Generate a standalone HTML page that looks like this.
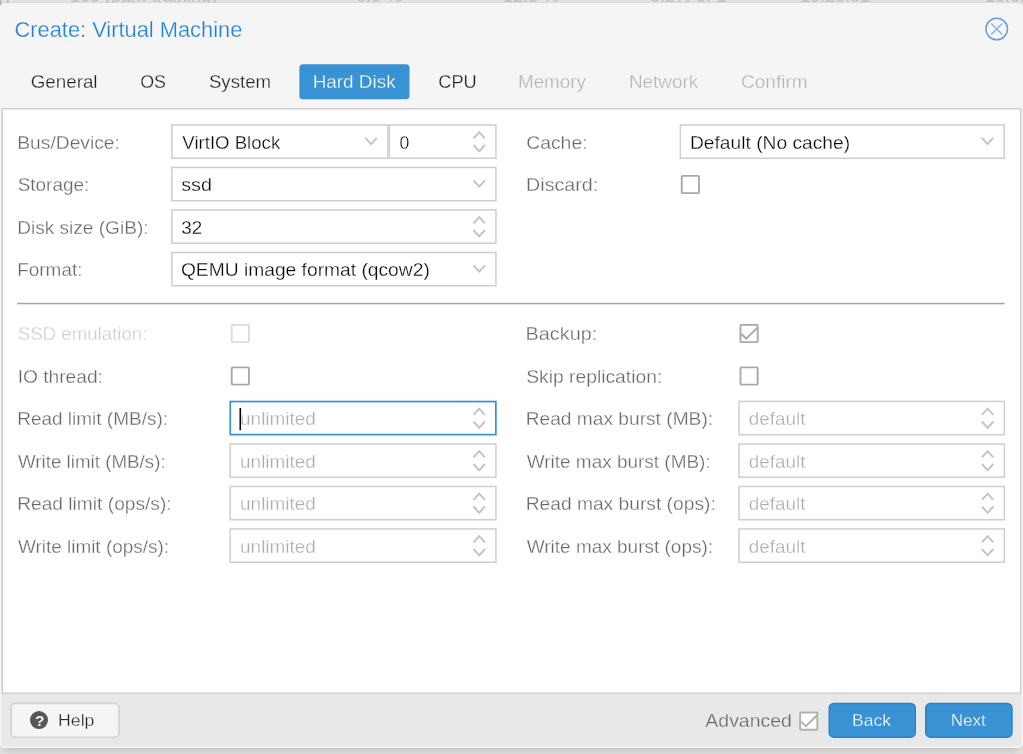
<!DOCTYPE html>
<html><head><meta charset="utf-8"><title>Create: Virtual Machine</title>
<style>
html,body{margin:0;padding:0;background:#dcdcdc;}
body{width:1023px;height:754px;overflow:hidden;}
svg{display:block;}
text{font-family:'Liberation Sans', Arial, sans-serif;font-size:18.7px;white-space:pre;stroke-linejoin:round;}
.title{font-size:22.4px;fill:#2583d2;stroke:#f5f5f5;stroke-width:.25px;}
.tab{fill:#1e1e1e;stroke:#f5f5f5;stroke-width:.28px;}
.tabact{fill:#fff;stroke:#3892d4;stroke-width:.28px;}
.tabdis{fill:#b4b4b4;stroke:#f5f5f5;stroke-width:.28px;}
.lbl{fill:#696969;stroke:#fff;stroke-width:.28px;}
.lbldis{fill:#cfcfcf;stroke:#fff;stroke-width:.28px;}
.val{fill:#080808;stroke:#fff;stroke-width:.28px;}
.ph{fill:#adadad;stroke:#fff;stroke-width:.28px;}
.btn{font-size:17.3px;fill:#fff;stroke:#3892d4;stroke-width:.28px;}
.btnhelp{font-size:17.3px;fill:#2a2a2a;stroke:#f5f5f5;stroke-width:.28px;}
.adv{fill:#666;stroke:#e8e8e8;stroke-width:.28px;}
.q{font-size:15.5px;font-weight:bold;fill:#f5f5f5;}
.under{font-size:18px;fill:#c0c0c0;}
</style></head><body>
<svg width="1023" height="754" viewBox="0 0 1023 754">
<defs>
<linearGradient id="gtop" x1="0" y1="0" x2="0" y2="1"><stop offset="0" stop-color="#e7e7e7"/><stop offset="1" stop-color="#d9d9d9"/></linearGradient>
<filter id="sh" x="-5%" y="-5%" width="110%" height="110%"><feGaussianBlur stdDeviation="3"/></filter>
</defs>
<rect x="0" y="0" width="1023" height="754" fill="#e1e1e1"/>
<rect x="0" y="0" width="1023" height="3.2" fill="url(#gtop)"/>
<rect x="0" y="0" width="1.6" height="5" fill="#bcbcbc"/>
<rect x="7" y="0" width="1.6" height="3" fill="#b4b4b4"/>
<text id="u1" class="under" x="70" y="2">100 (pam-training)</text>
<text id="u2" class="under" x="356" y="2">0.0 %</text>
<text id="u3" class="under" x="503" y="2">12.5 %</text>
<text id="u4" class="under" x="650" y="2">0.2% of 1</text>
<text id="u5" class="under" x="800" y="2">10:20:01</text>
<text id="u6" class="under" x="985" y="2">10.0.0.1</text>
<rect x="3" y="10" width="1017" height="741.5" rx="5" fill="#000" filter="url(#sh)" opacity="0.12"/>
<rect x="0" y="3" width="1023" height="744.9" rx="5" fill="#f5f5f5"/>
<path d="M1.5 694 H1021.5 V742.3 a4 4 0 0 1 -4 4 H5.5 a4 4 0 0 1 -4 -4 Z" fill="#e8e8e8"/>
<rect x="2.25" y="108.75" width="1018.50" height="584.50" fill="#fff" stroke="#cfcfcf" stroke-width="1.5"/>
<circle cx="996.7" cy="29" r="10.8" fill="none" stroke="#689dd5" stroke-width="1.45"/>
<path d="M991.2 23.5 L1002.2 34.5 M1002.2 23.5 L991.2 34.5" stroke="#86aee6" stroke-width="1.25" fill="none"/>
<rect x="299.40" y="64.20" width="110.10" height="35.00" fill="#3892d4" rx="3.5"/>
<rect x="171.85" y="124.95" width="216.00" height="33.30" fill="#fff" stroke="#cfcfcf" stroke-width="1.5"/>
<path d="M365.40 137.90 L371.10 144.20 L376.80 137.90" fill="none" stroke="#c3c3c3" stroke-width="1.9"/>
<rect x="389.35" y="124.95" width="106.60" height="33.30" fill="#fff" stroke="#cfcfcf" stroke-width="1.5"/>
<path d="M473.50 138.40 L479.20 132.10 L484.90 138.40" fill="none" stroke="#c3c3c3" stroke-width="1.9"/>
<path d="M473.50 145.00 L479.20 151.30 L484.90 145.00" fill="none" stroke="#c3c3c3" stroke-width="1.9"/>
<rect x="171.85" y="167.45" width="324.10" height="33.30" fill="#fff" stroke="#cfcfcf" stroke-width="1.5"/>
<path d="M473.50 180.40 L479.20 186.70 L484.90 180.40" fill="none" stroke="#c3c3c3" stroke-width="1.9"/>
<rect x="171.85" y="209.95" width="324.10" height="33.30" fill="#fff" stroke="#cfcfcf" stroke-width="1.5"/>
<path d="M473.50 223.40 L479.20 217.10 L484.90 223.40" fill="none" stroke="#c3c3c3" stroke-width="1.9"/>
<path d="M473.50 230.00 L479.20 236.30 L484.90 230.00" fill="none" stroke="#c3c3c3" stroke-width="1.9"/>
<rect x="171.85" y="252.45" width="324.10" height="33.30" fill="#fff" stroke="#cfcfcf" stroke-width="1.5"/>
<path d="M473.50 265.40 L479.20 271.70 L484.90 265.40" fill="none" stroke="#c3c3c3" stroke-width="1.9"/>
<rect x="680.35" y="124.95" width="323.90" height="33.30" fill="#fff" stroke="#cfcfcf" stroke-width="1.5"/>
<path d="M981.80 137.90 L987.50 144.20 L993.20 137.90" fill="none" stroke="#c3c3c3" stroke-width="1.9"/>
<rect x="681.75" y="175.85" width="17.20" height="17.30" fill="#fff" stroke="#a9a9a9" stroke-width="1.9" rx="0.8"/>
<rect x="17.2" y="302.8" width="987.3" height="1.6" fill="#a2a2a2"/>
<rect x="17.2" y="304.4" width="987.3" height="0.8" fill="#ededed"/>
<rect x="231.70" y="324.85" width="17.20" height="17.30" fill="#fff" stroke="#dcdcdc" stroke-width="1.9" rx="0.8"/>
<rect x="231.70" y="367.35" width="17.20" height="17.30" fill="#fff" stroke="#a9a9a9" stroke-width="1.9" rx="0.8"/>
<rect x="230.28" y="401.57" width="265.55" height="33.05" fill="#fff" stroke="#3892d4" stroke-width="1.75"/>
<path d="M473.50 414.90 L479.20 408.60 L484.90 414.90" fill="none" stroke="#c3c3c3" stroke-width="1.9"/>
<path d="M473.50 421.50 L479.20 427.80 L484.90 421.50" fill="none" stroke="#c3c3c3" stroke-width="1.9"/>
<rect x="239.50" y="407.90" width="1.6" height="22.3" fill="#000"/>
<rect x="230.15" y="443.95" width="265.80" height="33.30" fill="#fff" stroke="#cfcfcf" stroke-width="1.5"/>
<path d="M473.50 457.40 L479.20 451.10 L484.90 457.40" fill="none" stroke="#c3c3c3" stroke-width="1.9"/>
<path d="M473.50 464.00 L479.20 470.30 L484.90 464.00" fill="none" stroke="#c3c3c3" stroke-width="1.9"/>
<rect x="230.15" y="486.45" width="265.80" height="33.30" fill="#fff" stroke="#cfcfcf" stroke-width="1.5"/>
<path d="M473.50 499.90 L479.20 493.60 L484.90 499.90" fill="none" stroke="#c3c3c3" stroke-width="1.9"/>
<path d="M473.50 506.50 L479.20 512.80 L484.90 506.50" fill="none" stroke="#c3c3c3" stroke-width="1.9"/>
<rect x="230.15" y="528.95" width="265.80" height="33.30" fill="#fff" stroke="#cfcfcf" stroke-width="1.5"/>
<path d="M473.50 542.40 L479.20 536.10 L484.90 542.40" fill="none" stroke="#c3c3c3" stroke-width="1.9"/>
<path d="M473.50 549.00 L479.20 555.30 L484.90 549.00" fill="none" stroke="#c3c3c3" stroke-width="1.9"/>
<rect x="740.50" y="324.85" width="17.20" height="17.30" fill="#fff" stroke="#a9a9a9" stroke-width="1.9" rx="0.8"/>
<path d="M741.45 334.00 L746.25 338.60 L757.45 327.60" fill="none" stroke="#a9a9a9" stroke-width="1.9"/>
<rect x="740.50" y="367.35" width="17.20" height="17.30" fill="#fff" stroke="#a9a9a9" stroke-width="1.9" rx="0.8"/>
<rect x="739.05" y="401.45" width="265.30" height="33.30" fill="#fff" stroke="#cfcfcf" stroke-width="1.5"/>
<path d="M981.90 414.90 L987.60 408.60 L993.30 414.90" fill="none" stroke="#c3c3c3" stroke-width="1.9"/>
<path d="M981.90 421.50 L987.60 427.80 L993.30 421.50" fill="none" stroke="#c3c3c3" stroke-width="1.9"/>
<rect x="739.05" y="443.95" width="265.30" height="33.30" fill="#fff" stroke="#cfcfcf" stroke-width="1.5"/>
<path d="M981.90 457.40 L987.60 451.10 L993.30 457.40" fill="none" stroke="#c3c3c3" stroke-width="1.9"/>
<path d="M981.90 464.00 L987.60 470.30 L993.30 464.00" fill="none" stroke="#c3c3c3" stroke-width="1.9"/>
<rect x="739.05" y="486.45" width="265.30" height="33.30" fill="#fff" stroke="#cfcfcf" stroke-width="1.5"/>
<path d="M981.90 499.90 L987.60 493.60 L993.30 499.90" fill="none" stroke="#c3c3c3" stroke-width="1.9"/>
<path d="M981.90 506.50 L987.60 512.80 L993.30 506.50" fill="none" stroke="#c3c3c3" stroke-width="1.9"/>
<rect x="739.05" y="528.95" width="265.30" height="33.30" fill="#fff" stroke="#cfcfcf" stroke-width="1.5"/>
<path d="M981.90 542.40 L987.60 536.10 L993.30 542.40" fill="none" stroke="#c3c3c3" stroke-width="1.9"/>
<path d="M981.90 549.00 L987.60 555.30 L993.30 549.00" fill="none" stroke="#c3c3c3" stroke-width="1.9"/>
<rect x="11.20" y="703.40" width="107.60" height="33.80" fill="#f5f5f5" stroke="#d2d2d2" stroke-width="1.6" rx="4"/>
<circle cx="39" cy="720.1" r="9" fill="#575757"/>
<rect x="800.15" y="712.45" width="17.20" height="17.30" fill="#fff" stroke="#b0b0b0" stroke-width="1.9" rx="0.8"/>
<path d="M801.10 721.60 L805.90 726.20 L817.10 715.20" fill="none" stroke="#b0b0b0" stroke-width="1.9"/>
<rect x="829.25" y="703.55" width="86.00" height="33.60" fill="#3892d4" stroke="#2a82cc" stroke-width="1.5" rx="4.5"/>
<rect x="925.75" y="703.55" width="86.20" height="33.60" fill="#3892d4" stroke="#2a82cc" stroke-width="1.5" rx="4.5"/>
<g style="opacity:0.999">
<text id="title" class="title" x="14.48" y="37" textLength="227.86" lengthAdjust="spacingAndGlyphs">Create: Virtual Machine</text>
<text id="tGeneral" class="tab" x="30.69" y="88" textLength="66.85" lengthAdjust="spacingAndGlyphs">General</text>
<text id="tOS" class="tab" x="140.25" y="88" textLength="25.77" lengthAdjust="spacingAndGlyphs">OS</text>
<text id="tSystem" class="tab" x="208.95" y="88" textLength="62.16" lengthAdjust="spacingAndGlyphs">System</text>
<text id="tHard" class="tabact" x="312.68" y="88" textLength="82.92" lengthAdjust="spacingAndGlyphs">Hard Disk</text>
<text id="tCPU" class="tab" x="438.22" y="88" textLength="38.51" lengthAdjust="spacingAndGlyphs">CPU</text>
<text id="tMemory" class="tabdis" x="517.93" y="88" textLength="68.12" lengthAdjust="spacingAndGlyphs">Memory</text>
<text id="tNetwork" class="tabdis" x="628.93" y="88" textLength="69.42" lengthAdjust="spacingAndGlyphs">Network</text>
<text id="tConfirm" class="tabdis" x="740.93" y="88" textLength="66.82" lengthAdjust="spacingAndGlyphs">Confirm</text>
<text id="lBus" class="lbl" x="17.25" y="149" textLength="102.67" lengthAdjust="spacingAndGlyphs">Bus/Device:</text>
<text id="vVirt" class="val" x="182.35" y="149" textLength="97.86" lengthAdjust="spacingAndGlyphs">VirtIO Block</text>
<text id="v0" class="val" x="399.39" y="149" textLength="9.87" lengthAdjust="spacingAndGlyphs">0</text>
<text id="lStorage" class="lbl" x="17.69" y="191" textLength="71.54" lengthAdjust="spacingAndGlyphs">Storage:</text>
<text id="vssd" class="val" x="181.16" y="191" textLength="30.82" lengthAdjust="spacingAndGlyphs">ssd</text>
<text id="lDisk" class="lbl" x="17.17" y="234" textLength="131.42" lengthAdjust="spacingAndGlyphs">Disk size (GiB):</text>
<text id="v32" class="val" x="181.20" y="234" textLength="20.91" lengthAdjust="spacingAndGlyphs">32</text>
<text id="lFormat" class="lbl" x="17.18" y="276" textLength="65.29" lengthAdjust="spacingAndGlyphs">Format:</text>
<text id="vQemu" class="val" x="180.92" y="276" textLength="248.88" lengthAdjust="spacingAndGlyphs">QEMU image format (qcow2)</text>
<text id="lCache" class="lbl" x="526.16" y="149" textLength="61.42" lengthAdjust="spacingAndGlyphs">Cache:</text>
<text id="vDefault" class="val" x="689.91" y="149" textLength="160.23" lengthAdjust="spacingAndGlyphs">Default (No cache)</text>
<text id="lDiscard" class="lbl" x="526.12" y="191" textLength="72.07" lengthAdjust="spacingAndGlyphs">Discard:</text>
<text id="lSSD" class="lbldis" x="17.70" y="340" textLength="129.69" lengthAdjust="spacingAndGlyphs">SSD emulation:</text>
<text id="lIO" class="lbl" x="17.65" y="383" textLength="85.30" lengthAdjust="spacingAndGlyphs">IO thread:</text>
<text id="lRl" class="lbl" x="17.18" y="425" textLength="150.89" lengthAdjust="spacingAndGlyphs">Read limit (MB/s):</text>
<text id="pu0" class="ph" x="240.08" y="425" textLength="75.83" lengthAdjust="spacingAndGlyphs">unlimited</text>
<text id="lWl" class="lbl" x="17.95" y="468" textLength="147.69" lengthAdjust="spacingAndGlyphs">Write limit (MB/s):</text>
<text id="pu1" class="ph" x="240.08" y="468" textLength="75.83" lengthAdjust="spacingAndGlyphs">unlimited</text>
<text id="lRo" class="lbl" x="17.16" y="510" textLength="154.52" lengthAdjust="spacingAndGlyphs">Read limit (ops/s):</text>
<text id="pu2" class="ph" x="240.08" y="510" textLength="75.83" lengthAdjust="spacingAndGlyphs">unlimited</text>
<text id="lWo" class="lbl" x="17.95" y="553" textLength="151.05" lengthAdjust="spacingAndGlyphs">Write limit (ops/s):</text>
<text id="pu3" class="ph" x="240.08" y="553" textLength="75.83" lengthAdjust="spacingAndGlyphs">unlimited</text>
<text id="lBackup" class="lbl" x="525.61" y="340" textLength="71.58" lengthAdjust="spacingAndGlyphs">Backup:</text>
<text id="lSkip" class="lbl" x="526.17" y="383" textLength="136.11" lengthAdjust="spacingAndGlyphs">Skip replication:</text>
<text id="lRm" class="lbl" x="525.66" y="425" textLength="187.47" lengthAdjust="spacingAndGlyphs">Read max burst (MB):</text>
<text id="pd0" class="ph" x="748.89" y="425" textLength="56.62" lengthAdjust="spacingAndGlyphs">default</text>
<text id="lWm" class="lbl" x="526.70" y="468" textLength="183.99" lengthAdjust="spacingAndGlyphs">Write max burst (MB):</text>
<text id="pd1" class="ph" x="748.89" y="468" textLength="56.62" lengthAdjust="spacingAndGlyphs">default</text>
<text id="lRb" class="lbl" x="525.66" y="510" textLength="190.07" lengthAdjust="spacingAndGlyphs">Read max burst (ops):</text>
<text id="pd2" class="ph" x="748.89" y="510" textLength="56.62" lengthAdjust="spacingAndGlyphs">default</text>
<text id="lWb" class="lbl" x="526.70" y="553" textLength="186.33" lengthAdjust="spacingAndGlyphs">Write max burst (ops):</text>
<text id="pd3" class="ph" x="748.89" y="553" textLength="56.62" lengthAdjust="spacingAndGlyphs">default</text>
<text id="q" class="q" x="34.90" y="725.5">?</text>
<text id="bHelp" class="btnhelp" x="58.07" y="726" textLength="36.34" lengthAdjust="spacingAndGlyphs">Help</text>
<text id="lAdv" class="adv" x="705.35" y="727" textLength="86.53" lengthAdjust="spacingAndGlyphs">Advanced</text>
<text id="bBack" class="btn" x="852.08" y="726" textLength="38.89" lengthAdjust="spacingAndGlyphs">Back</text>
<text id="bNext" class="btn" x="950.67" y="726" textLength="35.13" lengthAdjust="spacingAndGlyphs">Next</text>
</g>
</svg>
</body></html>
